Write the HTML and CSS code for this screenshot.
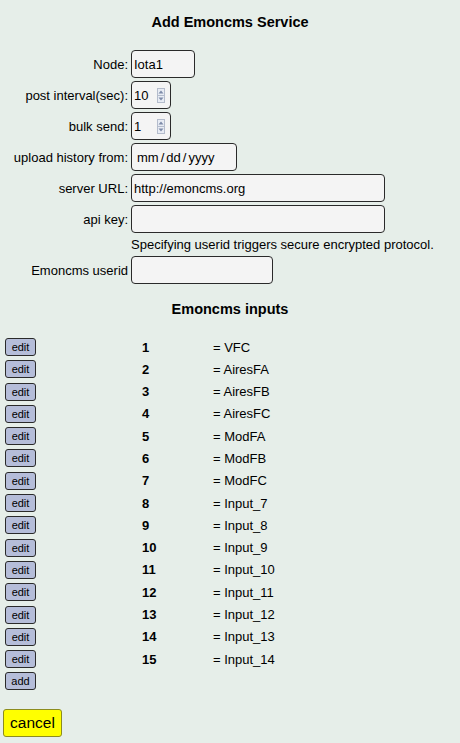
FILE: index.html
```html
<!DOCTYPE html>
<html>
<head>
<meta charset="utf-8">
<link rel="stylesheet" href="styles.css">
</head>
<body>
<div class="title">Add Emoncms Service</div>
<div class="form">
  <label class="lbl">Node:</label>
  <div class="field w-node"><span class="val">Iota1</span></div>
  <label class="lbl">post interval(sec):</label>
  <div class="field w-spin"><span class="val">10</span><svg class="spin" width="8" height="15" viewBox="0 0 8 15"><rect x="0.5" y="0.5" width="7" height="14" fill="#e8ecf4" stroke="#b4bccc"/><line x1="0.5" y1="7.5" x2="7.5" y2="7.5" stroke="#b4bccc"/><path d="M4 2.5 L6.5 5.5 L1.5 5.5 Z" fill="#7d8aa8"/><path d="M4 12.5 L6.5 9.5 L1.5 9.5 Z" fill="#7d8aa8"/></svg></div>
  <label class="lbl">bulk send:</label>
  <div class="field w-spin"><span class="val">1</span><svg class="spin" width="8" height="15" viewBox="0 0 8 15"><rect x="0.5" y="0.5" width="7" height="14" fill="#e8ecf4" stroke="#b4bccc"/><line x1="0.5" y1="7.5" x2="7.5" y2="7.5" stroke="#b4bccc"/><path d="M4 2.5 L6.5 5.5 L1.5 5.5 Z" fill="#7d8aa8"/><path d="M4 12.5 L6.5 9.5 L1.5 9.5 Z" fill="#7d8aa8"/></svg></div>
  <label class="lbl">upload history from:</label>
  <div class="field w-date"><span class="val date">mm<span class="sl">/</span>dd<span class="sl">/</span>yyyy</span></div>
  <label class="lbl">server URL:</label>
  <div class="field w-url"><span class="val">http://emoncms.org</span></div>
  <label class="lbl">api key:</label>
  <div class="field w-url"></div>
  <span></span>
  <div class="note">Specifying userid triggers secure encrypted protocol.</div>
  <label class="lbl">Emoncms userid</label>
  <div class="field w-user"></div>
</div>
<div class="subtitle">Emoncms inputs</div>
<div class="inputs">
  <button class="btn">edit</button><b class="num">1</b><span class="name">= VFC</span>
  <button class="btn">edit</button><b class="num">2</b><span class="name">= AiresFA</span>
  <button class="btn">edit</button><b class="num">3</b><span class="name">= AiresFB</span>
  <button class="btn">edit</button><b class="num">4</b><span class="name">= AiresFC</span>
  <button class="btn">edit</button><b class="num">5</b><span class="name">= ModFA</span>
  <button class="btn">edit</button><b class="num">6</b><span class="name">= ModFB</span>
  <button class="btn">edit</button><b class="num">7</b><span class="name">= ModFC</span>
  <button class="btn">edit</button><b class="num">8</b><span class="name">= Input_7</span>
  <button class="btn">edit</button><b class="num">9</b><span class="name">= Input_8</span>
  <button class="btn">edit</button><b class="num">10</b><span class="name">= Input_9</span>
  <button class="btn">edit</button><b class="num">11</b><span class="name">= Input_10</span>
  <button class="btn">edit</button><b class="num">12</b><span class="name">= Input_11</span>
  <button class="btn">edit</button><b class="num">13</b><span class="name">= Input_12</span>
  <button class="btn">edit</button><b class="num">14</b><span class="name">= Input_13</span>
  <button class="btn">edit</button><b class="num">15</b><span class="name">= Input_14</span>
  <button class="btn">add</button><span></span><span></span>
</div>
<button class="cancel">cancel</button>
</body>
</html>
```
FILE: styles.css
```css
html, body {
  margin: 0;
  padding: 0;
  background: #e6eee9;
}
body {
  font-family: "Liberation Sans", Arial, sans-serif;
  font-size: 13px;
  color: #000;
  width: 460px;
  height: 743px;
  overflow: hidden;
}
.title {
  margin-top: 13px;
  text-align: center;
  font-weight: bold;
  font-size: 14.5px;
  line-height: 18px;
  height: 18px;
}
.form {
  margin-top: 19px;
  display: grid;
  grid-template-columns: 128px auto;
  column-gap: 3px;
  row-gap: 3px;
  align-items: center;
  justify-items: start;
}
.lbl {
  justify-self: end;
  font-size: 13px;
}
.field {
  box-sizing: border-box;
  height: 28px;
  border: 1px solid #2a2a2a;
  border-radius: 4px;
  background: #f4f4f4;
  display: flex;
  align-items: center;
  padding-left: 2px;
  font-size: 13px;
}
.w-node { width: 64px; }
.w-spin { width: 40px; height: 28px; }
.w-date { width: 106px; padding-left: 5px; }
.w-url { width: 254px; }
.w-user { width: 142px; }
.val { flex: 1; }
.date .sl { margin: 0 2px; }
.spin { margin-right: 5px; margin-top: 1px; }
.note {
  line-height: 17px;
  font-size: 13px;
  white-space: nowrap;
}
.subtitle {
  margin-top: 16px;
  text-align: center;
  font-weight: bold;
  font-size: 14.5px;
  line-height: 18px;
  height: 18px;
}
.inputs {
  margin-top: 20px;
  padding-left: 5px;
  display: grid;
  grid-template-columns: 137px 71px auto;
  grid-auto-rows: 18px;
  row-gap: 4.3px;
  align-items: center;
}
.btn {
  box-sizing: border-box;
  width: 31px;
  height: 18px;
  padding: 0;
  margin: 0;
  font-family: "Liberation Sans", Arial, sans-serif;
  font-size: 11px;
  color: #000;
  background: #b5bdd9;
  border: 1px solid #2a2a2a;
  border-radius: 3px;
  line-height: 16px;
}
.num {
  font-size: 13px;
  font-weight: bold;
}
.name { font-size: 13px; }
.cancel {
  display: block;
  margin: 19px 0 0 3px;
  box-sizing: border-box;
  width: 59px;
  height: 28px;
  padding: 0;
  font-family: "Liberation Sans", Arial, sans-serif;
  font-size: 15.5px;
  color: #000;
  background: #ffff00;
  border: 1px solid #8c8c1e;
  border-radius: 3px;
}
```
